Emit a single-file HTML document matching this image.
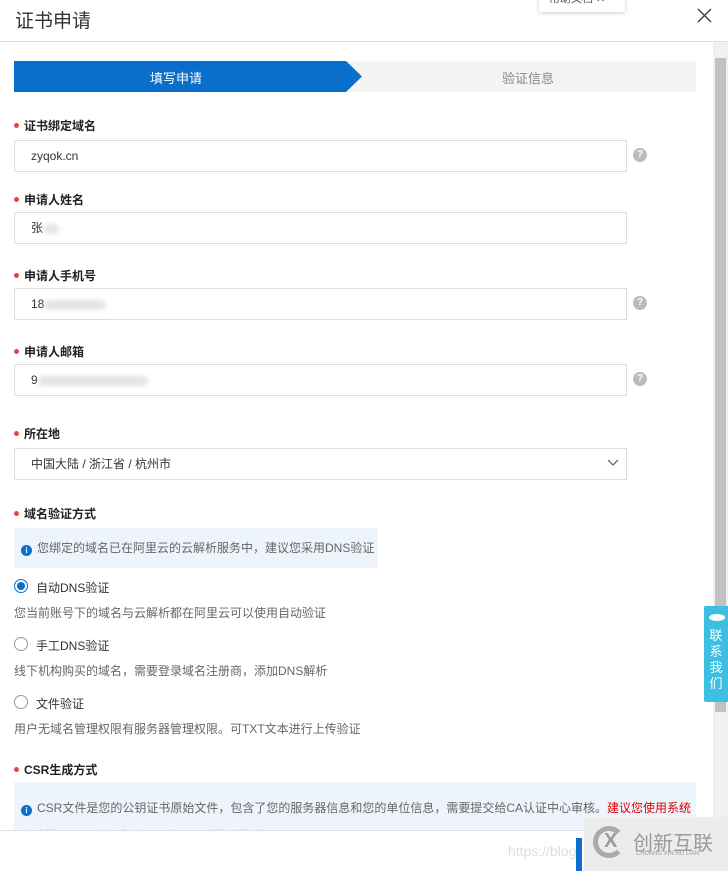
<!DOCTYPE html>
<html><head><meta charset="utf-8"><style>
*{margin:0;padding:0;box-sizing:border-box}
body{width:728px;height:871px;overflow:hidden;background:#fff;font-family:"Liberation Sans","Noto Sans CJK SC",sans-serif;color:#333;position:relative;font-size:12px}
.a{position:absolute}
.lbl{position:absolute;left:14px;font-size:12px;font-weight:bold;color:#222}
.lbl:before{content:"";display:inline-block;width:5px;height:5px;border-radius:50%;background:#e04848;margin-right:5px;vertical-align:2px}
.inp{position:absolute;left:14px;width:613px;height:32px;border:1px solid #ddd;padding-left:16px;line-height:30px;font-size:12px;color:#333}
.q{position:absolute;left:633px;width:14px;height:14px;border-radius:50%;background:#bbb;color:#fff;font-size:10px;text-align:center;line-height:14px;font-weight:bold}
.rad{position:absolute;left:14px;width:14px;height:14px;border-radius:50%;border:1px solid #999}
.rt{position:absolute;left:36px;font-size:12px;color:#333}
.desc{position:absolute;left:14px;font-size:12px;color:#666}
.i{display:inline-block;width:11px;height:11px;border-radius:50%;background:#0a6fd0;color:#fff;font-size:8px;text-align:center;line-height:11px;font-weight:bold;margin-right:5px;vertical-align:-1px}
.blur{display:inline-block;height:10px;background:#e4e4e4;border-radius:5px;vertical-align:middle;filter:blur(2px)}
</style></head><body>
<div class="a" style="left:15px;top:6px;font-size:19px;color:#333">证书申请</div>
<div class="a" style="left:539px;top:-8px;width:86px;height:20px;background:#fff;box-shadow:0 1px 4px rgba(0,0,0,.2);font-size:11px;color:#555;padding-left:10px;line-height:14px">帮助文档 ✕</div>
<svg class="a" style="left:697px;top:8px" width="15" height="15"><path d="M1 1L14 14M14 1L1 14" stroke="#444" stroke-width="1.5"/></svg>
<div class="a" style="left:0;top:41px;width:728px;height:1px;background:#ddd"></div>
<div class="a" style="left:713px;top:42px;width:15px;height:829px;background:#f0f0f0"></div>
<div class="a" style="left:715px;top:58px;width:11px;height:654px;background:#c2c2c2"></div>
<div class="a" style="left:14px;top:61px;width:682px;height:31px;background:#f4f4f4"></div>
<svg class="a" style="left:14px;top:61px" width="348" height="31"><polygon points="0,0 332,0 348,15.5 332,31 0,31" fill="#0a6fca"/></svg>
<div class="a" style="left:150px;top:68px;font-size:13px;color:#fff">填写申请</div>
<div class="a" style="left:502px;top:68px;font-size:13px;color:#888">验证信息</div>

<div class="lbl" style="top:117px">证书绑定域名</div>
<div class="inp" style="top:140px">zyqok.cn</div><div class="q" style="top:148px">?</div>
<div class="lbl" style="top:191px">申请人姓名</div>
<div class="inp" style="top:212px">张<span class="blur" style="width:16px"></span></div>
<div class="lbl" style="top:267px">申请人手机号</div>
<div class="inp" style="top:288px">18<span class="blur" style="width:62px"></span></div><div class="q" style="top:296px">?</div>
<div class="lbl" style="top:343px">申请人邮箱</div>
<div class="inp" style="top:364px">9<span class="blur" style="width:110px"></span></div><div class="q" style="top:372px">?</div>
<div class="lbl" style="top:425px">所在地</div>
<div class="inp" style="top:448px">中国大陆 / 浙江省 / 杭州市<svg class="a" style="left:592px;top:10px" width="12" height="8"><polyline points="1,1 6,6 11,1" fill="none" stroke="#666" stroke-width="1.3"/></svg></div>
<div class="lbl" style="top:505px">域名验证方式</div>
<div class="a" style="left:14px;top:528px;width:364px;height:40px;background:#edf4fb;padding:11px 0 0 7px;color:#666"><span class="i">i</span>您绑定的域名已在阿里云的云解析服务中，建议您采用DNS验证</div>
<div class="rad" style="top:579px;border-color:#0a6fca"><div style="margin:2px;width:8px;height:8px;border-radius:50%;background:#0a6fca"></div></div>
<div class="rt" style="top:579px">自动DNS验证</div>
<div class="desc" style="top:604px">您当前账号下的域名与云解析都在阿里云可以使用自动验证</div>
<div class="rad" style="top:637px"></div><div class="rt" style="top:637px">手工DNS验证</div>
<div class="desc" style="top:662px">线下机构购买的域名，需要登录域名注册商，添加DNS解析</div>
<div class="rad" style="top:695px"></div><div class="rt" style="top:695px">文件验证</div>
<div class="desc" style="top:720px">用户无域名管理权限有服务器管理权限。可TXT文本进行上传验证</div>
<div class="lbl" style="top:761px">CSR生成方式</div>
<div class="a" style="left:14px;top:782px;width:682px;height:48px;background:#edf4fb;padding:12px 0 0 7px;color:#666;overflow:hidden;line-height:28px"><span class="i">i</span>CSR文件是您的公钥证书原始文件，包含了您的服务器信息和您的单位信息，需要提交给CA认证中心审核。<span style="color:#d00">建议您使用系统创建的CSR，避免内容不正确而导致的审核失败</span></div>
<div class="a" style="left:0;top:830px;width:713px;height:41px;background:#fff;border-top:1px solid #e0e0e0"></div>
<div class="a" style="left:508px;top:843px;font-size:14px;color:#ddd">https://blog</div>
<div class="a" style="left:576px;top:838px;width:6px;height:33px;background:#0a6fca"></div>
<div class="a" style="left:584px;top:817px;width:144px;height:54px;background:#ececec"></div>
<div class="a" style="left:593px;top:826px;width:32px;height:32px;border-radius:50%;border:5px solid #aaa;border-right-color:transparent"></div>
<div class="a" style="left:604px;top:830px;font-size:20px;color:#999;font-weight:bold">X</div>
<div class="a" style="left:633px;top:827px;font-size:20px;color:#999">创新互联</div>
<div class="a" style="left:636px;top:851px;font-size:6px;color:#999">CHUANG XIN HU LIAN</div>
<div class="a" style="left:704px;top:606px;width:24px;height:96px;background:#3cbfe0;color:#fff;font-size:13px;text-align:center;line-height:16px;padding-top:22px;border-radius:2px 0 0 2px">联<br>系<br>我<br>们</div>
<div class="a" style="left:709px;top:614px;width:16px;height:7px;background:#fff;border-radius:50%"></div>
</body></html>
